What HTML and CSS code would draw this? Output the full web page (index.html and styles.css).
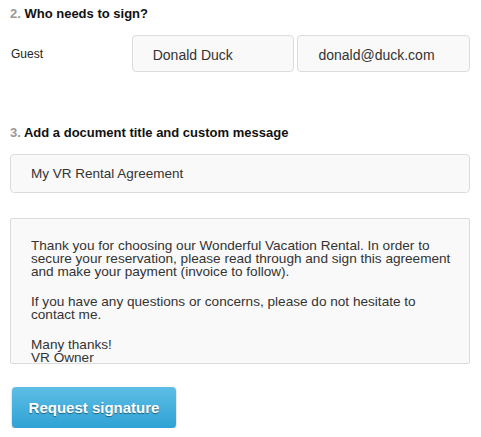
FILE: index.html
```html
<!DOCTYPE html>
<html>
<head>
<meta charset="utf-8">
<link rel="stylesheet" href="styles.css">
</head>
<body>
<div class="page">
  <h3 class="step"><span class="num">2.</span> Who needs to sign?</h3>
  <div class="signer">
    <div class="label">Guest</div>
    <div class="field name">Donald Duck</div>
    <div class="field email">donald@duck.com</div>
  </div>

  <h3 class="step step3"><span class="num">3.</span> Add a document title and custom message</h3>
  <div class="field title">My VR Rental Agreement</div>
  <div class="message">
    <p>Thank you for choosing our Wonderful Vacation Rental. In order to<br>secure your reservation, please read through and sign this agreement<br>and make your payment (invoice to follow).</p>
    <p>If you have any questions or concerns, please do not hesitate to<br>contact me.</p>
    <p>Many thanks!<br>VR Owner</p>
  </div>
  <button class="submit">Request signature</button>
</div>
</body>
</html>
```
FILE: styles.css
```css
html, body {
  margin: 0;
  padding: 0;
  background: #fff;
}
body {
  font-family: "Liberation Sans", Arial, Helvetica, sans-serif;
  color: #333;
}
.page {
  padding: 6px 11px 0 10px;
  width: 460px;
}
.step {
  margin: 0;
  font-size: 13px;
  line-height: 16px;
  font-weight: bold;
  color: #111;
}
.step .num {
  color: #999;
}
.step3 {
  margin-top: 53px;
}
.signer {
  display: flex;
  margin-top: 13px;
  gap: 3px;
}
.label {
  width: 118px;
  padding-left: 1px;
  padding-top: 11px;
  font-size: 12px;
  line-height: 16px;
  color: #222;
}
.field {
  box-sizing: border-box;
  border: 1px solid #dcdcdc;
  border-radius: 4px;
  background: #f9f9f9;
  font-size: 14px;
  color: #333;
  padding-left: 20px;
}
.name, .email {
  height: 37px;
  padding-top: 4px;
  line-height: 31px;
}
.name { width: 163px; }
.email { width: 173px; }
.title {
  margin-top: 13px;
  height: 39px;
  padding-top: 1px;
  line-height: 36px;
  font-size: 13.5px;
}
.message {
  box-sizing: border-box;
  margin-top: 25px;
  height: 146px;
  overflow: hidden;
  border: 1px solid #dcdcdc;
  border-radius: 2px;
  background: #f9f9f9;
  padding: 20px 10px 0 20px;
  font-size: 13.6px;
  line-height: 13px;
  color: #333;
  white-space: nowrap;
}
.message p {
  margin: 0 0 17px;
}
.submit {
  display: block;
  margin: 23px 0 0 2px;
  width: 164px;
  height: 41px;
  border: none;
  border-radius: 4px;
  background: linear-gradient(#5dbee5, #2fa2d5);
  box-shadow: 0 1px 2px rgba(0, 0, 0, 0.35);
  color: #fff;
  font-family: "Liberation Sans", Arial, Helvetica, sans-serif;
  font-size: 15px;
  font-weight: bold;
  text-shadow: 0 1px 1px rgba(0, 0, 0, 0.45);
  padding: 0;
}
```
